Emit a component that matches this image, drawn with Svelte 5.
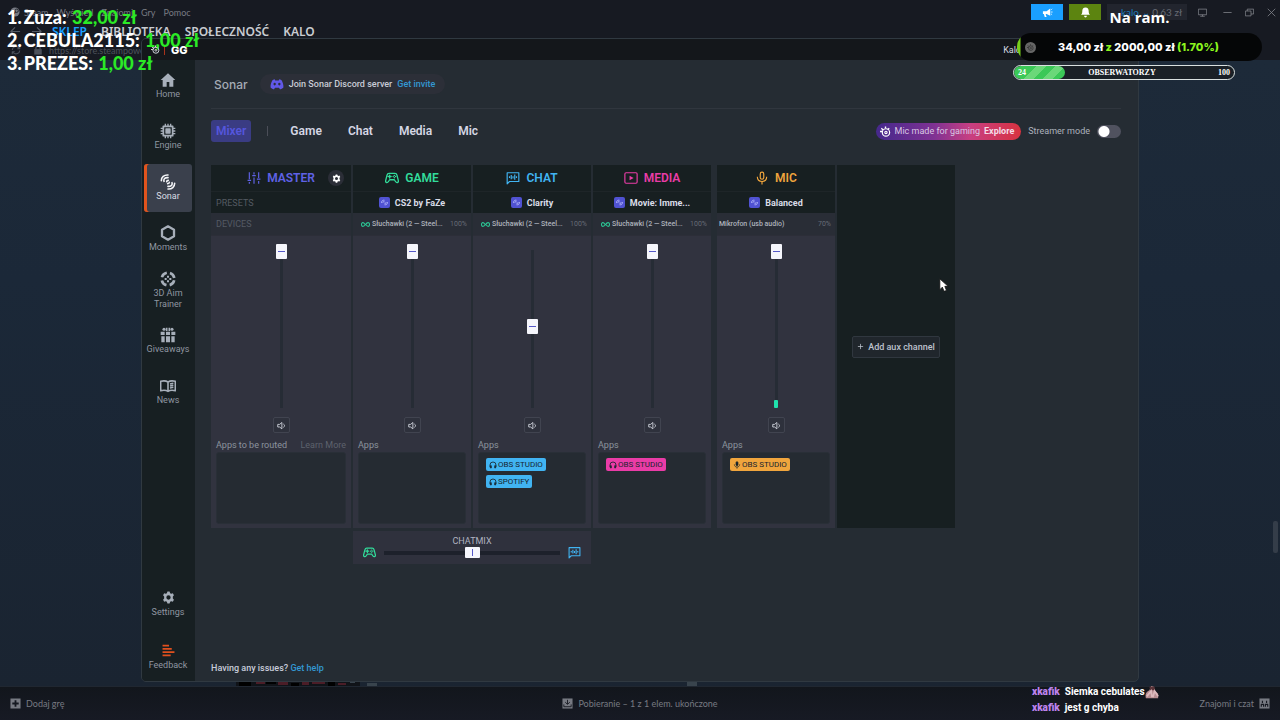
<script lang="ts">
  type Route = { name: string; icon: string };
  type Channel = {
    id: string;
    title: string;
    icon: string;
    preset?: string;
    device?: string;
    gain?: string;
    linked?: boolean;
    volume: number;
    level?: number;
    apps: Route[];
  };

  const steamMenu = ["Steam", "Wyświetl", "Znajomi", "Gry", "Pomoc"];
  const steamNav = ["SKLEP", "BIBLIOTEKA", "SPOŁECZNOŚĆ", "KALO"];

  const mainLinks = [
    { label: "Home", icon: "home" },
    { label: "Engine", icon: "chip" },
    { label: "Sonar", icon: "sonar" },
    { label: "Moments", icon: "hexagon" },
    { label: "3D Aim Trainer", icon: "aim" },
    { label: "Giveaways", icon: "gift" },
    { label: "News", icon: "book" },
  ];
  const footLinks = [
    { label: "Settings", icon: "gear" },
    { label: "Feedback", icon: "feedback" },
  ];

  const tabs = ["Game", "Chat", "Media", "Mic"];
  const headset = "Słuchawki (2 — Steel...";

  let channels = $state<Channel[]>([
    { id: "master", title: "MASTER", icon: "sliders", volume: 100, apps: [] },
    { id: "game", title: "GAME", icon: "gamepad", preset: "CS2 by FaZe", device: headset, gain: "100%", linked: true, volume: 100, apps: [] },
    { id: "chat", title: "CHAT", icon: "chat", preset: "Clarity", device: headset, gain: "100%", linked: true, volume: 50,
      apps: [{ name: "OBS STUDIO", icon: "headphones" }, { name: "SPOTIFY", icon: "headphones" }] },
    { id: "media", title: "MEDIA", icon: "media", preset: "Movie: Imme...", device: headset, gain: "100%", linked: true, volume: 100,
      apps: [{ name: "OBS STUDIO", icon: "headphones" }] },
    { id: "mic", title: "MIC", icon: "mic", preset: "Balanced", device: "Mikrofon (usb audio)", gain: "70%", volume: 100, level: 5,
      apps: [{ name: "OBS STUDIO", icon: "micsolid" }] },
  ]);

  let activePage = $state("Sonar");
  let activeTab = $state("Mixer");
  let chatmix = $state(50);
  let streamerMode = $state(false);

  const donations = [
    { name: "Zuza", amount: "32,00 zł" },
    { name: "CEBULA2115", amount: "1,00 zł" },
    { name: "PREZES", amount: "1,00 zł" },
  ];
</script>

{#snippet icon(name: string)}
  <svg class="icon {name}" viewBox="0 0 24 24" fill="none" stroke="currentColor" stroke-width="2" stroke-linejoin="round" aria-hidden="true">
    {#if name === "home"}
      <path d="M12 2 1 12h3v10h6v-7h4v7h6V12h3Z" fill="currentColor" stroke="none" />
    {:else if name === "chip"}
      <path d="M5 5h14v14H5Z" stroke-width="2.6" />
      <path d="M9 9h6v6H9Z" fill="currentColor" />
      <path d="M8 1v4M12 1v4M16 1v4M8 19v4M12 19v4M16 19v4M1 8h4M1 12h4M1 16h4M19 8h4M19 12h4M19 16h4" />
    {:else if name === "sonar"}
      <g stroke-width="2.4" stroke-linecap="round">
        <path d="M2 10C2 5 6 1 12 1.500M6 11c-1-4 2-6 6-5.500M10 11.500c0-1.500 1-2 2.500-2" />
        <path d="M22 14c0 5-4 9-10 8.500M18 13c1 4-2 6-6 5.500M14 12.500c0 1.500-1 2-2.500 2" />
      </g>
    {:else if name === "hexagon"}
      <path d="m12 2 9 5v10l-9 5-9-5V7Z" stroke-width="3.5" />
    {:else if name === "aim"}
      <circle cx="12" cy="12" r="9.500" stroke-width="4" stroke-dasharray="10 4.900" transform="rotate(12 12 12)" />
      <path d="M12 7v3M17 12h-3M12 17v-3M7 12h3" stroke-width="3" />
    {:else if name === "gift"}
      <path d="M1 7h6v5H1Zm8 0h6v5H9Zm8 0h6v5h-6ZM2 14h5v9H2Zm7 0h6v9H9Zm8 0h5v9h-5Z" fill="currentColor" stroke="none" />
      <circle cx="6" cy="3.500" r="2.300" fill="currentColor" stroke="none" />
      <circle cx="18" cy="3.500" r="2.300" fill="currentColor" stroke="none" />
      <path d="M10 1v5M14 1v5" stroke-width="2.500" />
    {:else if name === "book"}
      <path d="M12 6C9 4 5 4 1 5v14c4-1 8-1 11 1 3-2 7-2 11-1V5c-4-1-8-1-11 1ZM12 6v14M15 9l5-1M15 12l5-1M15 15l5-1" stroke-width="2.400" />
    {:else if name === "gear"}
      <path d="M10 1h4l1 3 2 1 3-1 2 4-2 2v4l2 2-2 4-3-1-2 1-1 3h-4l-1-3-2-1-3 1-2-4 2-2v-4L2 8l2-4 3 1 2-1Zm2 7a4 4 0 1 0 0 8 4 4 0 0 0 0-8Z" fill="currentColor" fill-rule="evenodd" stroke="none" />
    {:else if name === "feedback"}
      <path d="M1 3h12M1 9h17M1 15h22M1 21h15" stroke-width="3.4" />
    {:else if name === "sliders"}
      <path d="M4 2v12M4 19v3M12 2v4M12 11v11M20 2v10M20 17v5M1 16h6M9 8h6M17 14h6" />
    {:else if name === "gamepad"}
      <path d="M7 4h10c2 0 3 1 3.500 3L23 17c0 3-3 4-5 1l-2-3H8l-2 3c-2 3-5 2-5-1L3.500 7C4 5 5 4 7 4ZM8 7v5M5.500 9.500h5M16 7.500h.1M18 9.500h.1M14 9.500h.1M16 11.500h.1" stroke-linecap="round" stroke-width="2.300" />
    {:else if name === "chat"}
      <path d="M2 22V3h20v15H6Z" />
      <path d="M6 9v3M9 7v7M12 9v4M15 6v9M18 9v3" />
    {:else if name === "media"}
      <rect x="1.500" y="3" width="21" height="18" rx="2" />
      <path d="m9.500 8 7 4-7 4Z" fill="currentColor" stroke="none" />
    {:else if name === "mic" || name === "micsolid"}
      <rect x="9" y="2" width="6" height="12" rx="3" fill={name === "micsolid" ? "currentColor" : "none"} />
      <path d="M4 10c0 5 3 8 8 8s8-3 8-8M12 18v5" />
    {:else if name === "headphones"}
      <path d="M3 18v-6a9 9 0 0 1 18 0v6" stroke-width="2.500" />
      <path d="M4 14h3v7H4ZM17 14h3v7h-3Z" fill="currentColor" />
    {:else if name === "wave"}
      <path d="M4 13c0-5 3-8 8-7M8 13c-1-3 1-4 4-3M20 11c0 5-3 8-8 7M16 11c1 3-1 4-4 3" stroke-width="2.500" />
    {:else if name === "link"}
      <path d="M11 12c-2-3-3-5-6-5-5 0-5 10 0 10 3 0 5-2 7-5s4-5 7-5c5 0 5 10 0 10-3 0-4-2-6-5" stroke-width="2.800" />
    {:else if name === "speaker"}
      <path d="M2 9v7h5l6 5V4L7 9ZM17 8c4 2 4 7 0 9" stroke-width="2.400" />
    {:else if name === "plus"}
      <path d="M12 3v18M3 12h18" stroke-width="2.600" />
    {:else if name === "discord"}
      <path d="M8 4 4.500 5C2 9 .5 14 1 18c2 2 4 3 6 3l1.500-2.500h7L17 21c2 0 4-1 6-3 .5-4-1-9-3.500-13L16 4l-1 2H9ZM8 10a2 2.200 0 1 0 0 4.400A2 2.200 0 0 0 8 10Zm8 0a2 2.200 0 1 0 0 4.400A2 2.200 0 0 0 16 10Z" fill="currentColor" fill-rule="evenodd" stroke="none" />
    {:else if name === "series"}
      <circle cx="13" cy="14" r="8" stroke-width="2.600" />
      <circle cx="13" cy="14" r="2.500" stroke-width="2.500" />
      <path d="M0 12h5M3 5l4 4M12 1v4M20 5l-3 3" stroke-width="3" />
    {:else if name === "steam"}
      <circle cx="12" cy="12" r="11" fill="currentColor" stroke="none" />
      <circle cx="16" cy="9" r="4" stroke="#171a22" />
      <path d="m2 14 6 3 5-5" stroke="#171a22" stroke-width="3" />
    {:else if name === "back"}
      <path d="M22 12H3M11 3l-9 9 9 9" stroke-width="2.600" />
    {:else if name === "forward"}
      <path d="M2 12h19M13 3l9 9-9 9" stroke-width="2.600" />
    {:else if name === "reload"}
      <path d="M3 12a9 9 0 0 1 15-6l3 3M21 3v6h-6M21 13a9 9 0 0 1-15 6l-3-3M3 22v-6h6" stroke-width="2.600" />
    {:else if name === "lock"}
      <path d="M3 10h18v13H3Z" fill="currentColor" stroke="none" />
      <path d="M7 11V7c0-6 10-6 10 0v4" stroke-width="3" />
    {:else if name === "horn"}
      <path d="M2 9h8l8-6v16l-8-4H8l2 7H6l-2-7H2Z" fill="currentColor" stroke="none" />
      <path d="M20 11h3M20 6l2-2M20 15l2 2" />
    {:else if name === "bell"}
      <path d="M12 1c-5 0-7 3-7 8 0 4-1 6-3 8h20c-2-2-3-4-3-8 0-5-2-8-7-8ZM9 19h6c0 5-6 5-6 0Z" fill="currentColor" stroke="none" />
    {:else if name === "monitor"}
      <path d="M1 3h22v15H1ZM6 22h12M12 18v4" />
    {:else if name === "minimize"}
      <path d="M1 12h22" />
    {:else if name === "restore"}
      <path d="M1 8h15v13H1ZM6 8V3h17v13h-7" />
    {:else if name === "close"}
      <path d="m2 2 20 20M22 2 2 22" />
    {:else if name === "add"}
      <path d="M1 1h22v22H1ZM10 5v5H5v4h5v5h4v-5h5v-4h-5V5Z" fill="currentColor" fill-rule="evenodd" stroke="none" />
    {:else if name === "download"}
      <path d="M1 1h22v22H1Z" fill="currentColor" stroke="none" />
      <path d="M12 4v9M7 9l5 5 5-5M4 14v5h16v-5" stroke="#171a22" />
    {:else if name === "friends"}
      <path d="M1 1h22v22H1Z" fill="currentColor" stroke="none" />
      <path d="M5 19v-5h5v5M14 19v-5h5v5M7.500 6v5M16.500 6v5" stroke="#171a22" stroke-width="2.500" />
    {/if}
  </svg>
{/snippet}

<div class="desktop">
  <div class="steam">
    <header class="steam-header">
      <div class="steam-left">
        <nav class="steam-menu" aria-label="Menu">
          {@render icon("steam")}
          {#each steamMenu as item}
            <button>{item}</button>
          {/each}
        </nav>
        <nav class="steam-nav" aria-label="Steam">
          {@render icon("back")}
          {@render icon("forward")}
          {#each steamNav as item, i}
            <a href="#steam" class:current={i === 0}>{item}</a>
          {/each}
        </nav>
        <div class="address">
          {@render icon("reload")}
          {@render icon("lock")}
          <span>https://store.steampowered</span>
        </div>
      </div>
      <div class="steam-tools">
        <button class="notice" aria-label="Ogłoszenia">{@render icon("horn")}</button>
        <button class="notice alerts" aria-label="Powiadomienia">{@render icon("bell")}</button>
        <button class="account"><span>kalo ⌄</span> 0,63 zł</button>
        <button class="win" aria-label="Big Picture">{@render icon("monitor")}</button>
        <button class="win" aria-label="Minimalizuj">{@render icon("minimize")}</button>
        <button class="win" aria-label="Przywróć">{@render icon("restore")}</button>
        <button class="win" aria-label="Zamknij">{@render icon("close")}</button>
      </div>
    </header>
    <div class="store">
      <svg class="store-art" viewBox="0 0 470 5" aria-hidden="true">
        <path d="M0 0h124v5H0Z" fill="#101318" />
        <path d="M3 1h12v4H3M30 0h10v3H30M55 2h8v3h-8M92 1h7v4h-7" fill="#000" />
        <path d="M20 1h9v2h-9M42 0h10v4H42M66 1h7v3h-7M76 1h13v2H76M102 2h8v2h-8" fill="#4b1d27" />
        <path d="M114 0h5v2h-5M131 2h10v3h-10M451 0h10v5h-10" fill="#39444d" />
      </svg>
      <div class="scroll-thumb"></div>
    </div>
    <footer class="steam-footer">
      <button>{@render icon("add")}Dodaj grę</button>
      <button>{@render icon("download")}Pobieranie – 1 z 1 elem. ukończone</button>
      <button class="friends-button">Znajomi i czat{@render icon("friends")}</button>
    </footer>
  </div>

  <section class="gg">
    <header class="titlebar">
      <span class="brand">{@render icon("series")}<i></i><b>GG</b></span>
      <span class="user">Kalo</span>
    </header>
    <div class="gg-body">
      <nav class="sidebar" aria-label="GG">
        {#each mainLinks as link}
          <button class:active={activePage === link.label} onclick={() => (activePage = link.label)}>
            {@render icon(link.icon)}
            <span>{link.label}</span>
          </button>
        {/each}
        <div class="sidebar-foot">
          {#each footLinks as link}
            <button onclick={() => (activePage = link.label)}>
              {@render icon(link.icon)}
              <span>{link.label}</span>
            </button>
          {/each}
        </div>
      </nav>

      <main>
        <div class="page-head">
          <h1>Sonar</h1>
          <p class="discord-pill">{@render icon("discord")}Join Sonar Discord server <a href="#discord">Get invite</a></p>
        </div>

        <div class="toolbar">
          <button class="tab mixer" class:active={activeTab === "Mixer"} onclick={() => (activeTab = "Mixer")}>Mixer</button>
          <span class="divider"></span>
          {#each tabs as tab}
            <button class="tab" class:active={activeTab === tab} onclick={() => (activeTab = tab)}>{tab}</button>
          {/each}
          <a class="promo" href="#mic">{@render icon("series")}Mic made for gaming <b>Explore</b></a>
          <label class="streamer">Streamer mode <input type="checkbox" bind:checked={streamerMode} /></label>
        </div>

        <div class="board">
          {#each channels as channel (channel.id)}
            <section class="channel {channel.id}">
              <h2>
                {@render icon(channel.icon)}{channel.title}
                {#if channel.id === "master"}
                  <button class="config" aria-label="Mixer settings">{@render icon("gear")}</button>
                {/if}
              </h2>
              <div class="preset">
                {#if channel.preset}
                  <button><span class="preset-icon">{@render icon("wave")}</span>{channel.preset}</button>
                {:else}
                  PRESETS
                {/if}
              </div>
              <div class="device">
                {#if channel.device}
                  {#if channel.linked}{@render icon("link")}{/if}
                  <span class="device-name">{channel.device}</span>
                  <span class="gain">{channel.gain}</span>
                {:else}
                  DEVICES
                {/if}
              </div>
              <div class="strip">
                <div class="fader">
                  <input type="range" min="0" max="100" bind:value={channel.volume} aria-label="{channel.title} volume" />
                  {#if channel.level}
                    <span class="level" style="height: {channel.level}%"></span>
                  {/if}
                </div>
                <button class="mute" aria-label="Mute {channel.title}">{@render icon("speaker")}</button>
                <div class="apps-head">
                  {#if channel.id === "master"}
                    <span>Apps to be routed</span><a href="#routing">Learn More</a>
                  {:else}
                    <span>Apps</span>
                  {/if}
                </div>
                <div class="apps">
                  {#each channel.apps as app}
                    <button class="app">{@render icon(app.icon)}{app.name}</button>
                  {/each}
                </div>
              </div>
            </section>
          {/each}
          <section class="aux">
            <button>{@render icon("plus")}Add aux channel</button>
          </section>

          <section class="chatmix">
            <label for="chatmix">CHATMIX</label>
            <div class="mix-row">
              {@render icon("gamepad")}
              <input id="chatmix" type="range" min="0" max="100" bind:value={chatmix} />
              {@render icon("chat")}
            </div>
          </section>
        </div>

        <p class="help">Having any issues? <a href="#help">Get help</a></p>
      </main>
    </div>
  </section>

  <ol class="donations">
    {#each donations as donor, i}
      <li><span class="rank">{i + 1}.</span>{donor.name}: <em>{donor.amount}</em></li>
    {/each}
  </ol>

  <div class="stream-goals">
    <p class="goal-title">Na ram.</p>
    <div class="goal">
      <span class="coin">{@render icon("series")}</span>
      <p>34,00 zł <em>z</em> 2000,00 zł <em>(1.70%)</em></p>
    </div>
    <div class="viewers">
      <span class="viewers-fill" style="width: 23%"></span>
      <span>24</span><span>OBSERWATORZY</span><span>100</span>
    </div>
  </div>

  <div class="twitch-chat">
    <p>
      <b>xkafik</b>Siemka cebulates<svg class="emote" viewBox="0 0 16 16" aria-hidden="true">
        <path d="M1 15c-1-4 0-7 4-9l2-5 3 1 1 4 4 4v5Z" fill="#b78d91" />
        <path d="M5 2h6v4H6Z" fill="#5a3439" />
        <path d="m2 13 5-6 1 7M9 14l2-7 4 6" stroke="#dcb9bc" stroke-width="2" fill="none" />
      </svg>
    </p>
    <p><b>xkafik</b>jest g chyba</p>
  </div>

  <svg class="cursor" viewBox="0 0 12 18" aria-hidden="true">
    <path d="M1 1v13l3-3 2 5 3-1-2-5h4Z" fill="#fff" stroke="#111" />
  </svg>
</div>

<style>
  :global(body) {
    margin: 0;
    background: #171a22;
  }

  .desktop {
    position: relative;
    min-height: 100vh;
    overflow: hidden;
    font-family: Roboto, sans-serif;
    font-size: 9px;
    color: #d4d7e0;
  }

  button {
    border: 0;
    padding: 0;
    background: none;
    color: inherit;
    font: inherit;
    white-space: nowrap;
    cursor: pointer;
  }

  a {
    color: inherit;
    text-decoration: none;
  }

  p, h1, h2 {
    margin: 0;
  }

  .icon {
    display: block;
    flex: none;
    width: 12px;
    height: 12px;
  }

  /* Steam client in the background */
  .steam {
    display: flex;
    flex-direction: column;
    min-height: 100vh;
    font-family: Lato, sans-serif;
  }

  .steam-header {
    display: flex;
    justify-content: space-between;
    height: 60px;
    background: #171a22;
    color: #777a83;
  }

  .steam-left {
    display: flex;
    flex-direction: column;
  }

  .steam-menu {
    display: flex;
    align-items: center;
    gap: 8px;
    height: 24px;
    padding-left: 10px;
    font-size: 9px;
  }

  .steam-menu .icon {
    width: 10px;
    height: 10px;
    margin-right: -4px;
  }

  .steam-nav {
    display: flex;
    align-items: center;
    gap: 14px;
    height: 14px;
    padding-left: 10px;
    color: #c9ccd1;
    font: 600 12px "Noto Sans", sans-serif;
  }

  .steam-nav .icon {
    width: 11px;
    height: 11px;
    color: #555963;
    margin-right: -4px;
  }

  .current {
    color: #1a9fff;
  }

  .address {
    display: flex;
    align-items: center;
    gap: 12px;
    height: 22px;
    padding: 2px 0 0 11px;
    font-size: 9px;
    color: #4d525c;
  }

  .address .icon {
    width: 10px;
    height: 10px;
  }

  .address span {
    margin-left: -6px;
  }

  .steam-tools {
    display: flex;
    align-items: flex-start;
    gap: 6px;
    padding: 4px 1px 0 0;
  }

  .notice {
    display: grid;
    place-items: center;
    width: 32px;
    height: 16px;
    background: #1a9fff;
    color: #fff;
  }

  .alerts {
    background: #5c8410;
  }

  .notice .icon {
    width: 11px;
    height: 11px;
  }

  .account {
    box-sizing: border-box;
    width: 80px;
    height: 16px;
    padding-right: 5px;
    background: #22252e;
    color: #676b74;
    font-size: 10px;
    line-height: 16px;
    text-align: right;
  }

  .account span {
    color: #1b78bb;
  }

  .win {
    display: grid;
    place-items: center;
    width: 16px;
    height: 16px;
    color: #85888f;
  }

  .win .icon {
    width: 9px;
    height: 9px;
  }

  .account + .win {
    margin: 0 3px 0 1px;
  }

  .store {
    position: relative;
    display: flex;
    flex: 1;
    justify-content: flex-end;
    align-items: flex-end;
    padding: 0 2px 133px 0;
    background: linear-gradient(#1d2a39, #1b2838 35%, #1a2431);
  }

  .store-art {
    position: absolute;
    left: 236px;
    bottom: 0;
    width: 470px;
    height: 5px;
  }

  .scroll-thumb {
    width: 5px;
    height: 32px;
    border-radius: 2px;
    background: #343d49;
  }

  .steam-footer {
    display: grid;
    grid-template-columns: 1fr auto 1fr;
    align-items: center;
    height: 33px;
    padding: 0 10px;
    border-top: 1px solid #202731;
    background: linear-gradient(#12161c, #171a24);
    color: #777a82;
    font-size: 9px;
  }

  .steam-footer button {
    display: flex;
    align-items: center;
    gap: 5px;
  }

  .steam-footer .icon {
    width: 11px;
    height: 11px;
  }

  .steam-footer .friends-button {
    justify-self: end;
  }

  /* SteelSeries GG window */
  .gg {
    position: absolute;
    inset: 38px 141px;
    display: flex;
    flex-direction: column;
    border: 1px solid #303941;
    border-radius: 5px;
    overflow: hidden;
    background: #252c33;
  }

  .titlebar {
    display: flex;
    justify-content: space-between;
    align-items: center;
    height: 21px;
    padding: 0 117px 0 9px;
    background: #14171b;
    font-size: 9px;
  }

  .brand {
    display: flex;
    align-items: center;
    gap: 4px;
  }

  .brand .icon {
    width: 9px;
    height: 9px;
  }

  .brand i {
    width: 1px;
    height: 10px;
    background: #a9331b;
  }

  .brand b {
    margin-left: 2px;
    font: 800 11px Inter, sans-serif;
    color: #fff;
  }

  .gg-body {
    display: flex;
    flex: 1;
    min-height: 0;
  }

  .sidebar {
    display: flex;
    flex-direction: column;
    gap: 3px;
    width: 48px;
    padding: 2px 3px 0 2px;
    background: #171f22;
    color: #8f96a1;
  }

  .sidebar button {
    display: flex;
    flex-direction: column;
    align-items: center;
    justify-content: center;
    gap: 1px;
    flex: none;
    height: 48px;
    font-size: 9px;
    line-height: 11px;
    white-space: normal;
  }

  .sidebar .icon {
    width: 16px;
    height: 16px;
    color: #a7afba;
  }

  .sidebar button.active {
    border-radius: 3px;
    background: #3a404c;
    box-shadow: inset 3px 0 #e2541d;
    color: #d9dce3;
  }

  .sidebar button.active .icon {
    color: #f2f3f6;
  }

  .sidebar .gear, .sidebar .feedback {
    width: 13px;
    height: 13px;
    margin-bottom: 2px;
  }

  .sidebar .feedback {
    color: #e1501e;
  }

  .sidebar-foot {
    display: flex;
    flex-direction: column;
    gap: 5px;
    margin-top: auto;
  }

  main {
    display: flex;
    flex-direction: column;
    flex: 1;
    min-width: 0;
    padding: 0 17px 6px 16px;
  }

  .page-head {
    display: flex;
    align-items: center;
    gap: 12px;
    height: 48px;
    padding-left: 3px;
    border-bottom: 1px solid #30363e;
  }

  h1 {
    color: #a4abb5;
    font: 500 12px Inter, sans-serif;
  }

  .discord-pill {
    display: flex;
    align-items: center;
    gap: 5px;
    height: 20px;
    padding: 0 10px;
    border-radius: 10px;
    background: #2c2f38;
    color: #c9ccd6;
    font-weight: 500;
  }

  .discord-pill .icon {
    width: 14px;
    height: 14px;
    color: #6158e8;
  }

  .discord-pill a, .help a {
    color: #3398d2;
  }

  .toolbar {
    display: flex;
    align-items: center;
    height: 22px;
    margin: 11px 0 23px;
  }

  .tab {
    margin-right: 26px;
    color: #d5d7e5;
    font-size: 12px;
    font-weight: 600;
  }

  .mixer {
    height: 22px;
    margin-right: 0;
    padding: 0 5px;
    border-radius: 3px;
  }

  .mixer.active {
    background: #3a3c83;
    color: #5556dd;
  }

  .divider {
    width: 1px;
    height: 10px;
    margin: 0 22px 0 16px;
    background: #4b4e58;
  }

  .promo {
    display: flex;
    align-items: center;
    gap: 4px;
    height: 17px;
    margin-left: auto;
    padding: 0 7px 0 4px;
    border-radius: 9px;
    background: linear-gradient(90deg, #45288b, #7f3293 40%, #c83f82 65%, #d8323f);
    color: #d9c7e3;
  }

  .promo .icon {
    width: 11px;
    height: 11px;
    color: #fff;
  }

  .promo b {
    color: #f4dce7;
    font-weight: 700;
  }

  .streamer {
    display: flex;
    align-items: center;
    gap: 7px;
    margin-left: 7px;
    color: #adb2bc;
  }

  .streamer input {
    appearance: none;
    width: 24px;
    height: 13px;
    margin: 0;
    border-radius: 7px;
    background: radial-gradient(circle at 7px 50%, #fff 5px, transparent 6px), #50525f;
  }

  .streamer input:checked {
    background: radial-gradient(circle at 17px 50%, #fff 5px, transparent 6px), #5556dd;
  }

  .board {
    display: grid;
    grid-template-columns: 140px repeat(3, 118px) 122px 118px;
    column-gap: 2px;
    row-gap: 3px;
  }

  .channel {
    --tone: #5f62e6;
    min-width: 0;
    background: #31333f;
  }

  .channel.game { --tone: #32dc9b; }
  .channel.chat { --tone: #41b4f2; }
  .channel.media { --tone: #ea3ca7; }
  .channel.mic { --tone: #f0a53d; }

  .channel.mic {
    margin-left: 4px;
  }

  h2 {
    position: relative;
    display: flex;
    align-items: center;
    justify-content: center;
    gap: 6px;
    height: 26px;
    border-bottom: 1px solid #1e2528;
    background: #171f21;
    color: var(--tone);
    font-size: 12px;
    font-weight: 600;
  }

  h2 .icon {
    width: 14px;
    height: 14px;
  }

  .config {
    position: absolute;
    right: 7px;
    display: grid;
    place-items: center;
    width: 16px;
    height: 16px;
    border-radius: 50%;
    background: #2b2e37;
    color: #fff;
  }

  .config .icon {
    width: 9px;
    height: 9px;
  }

  .preset {
    display: flex;
    align-items: center;
    height: 21px;
    padding: 0 5px;
    background: #171f21;
    color: #545a61;
  }

  .preset button {
    display: flex;
    align-items: center;
    gap: 5px;
    margin: 0 auto;
    color: #dadce8;
    font-weight: 700;
  }

  .preset-icon {
    padding: 1px;
    border-radius: 2px;
    background: #5052d2;
    color: #b3b5fa;
  }

  .preset-icon .icon {
    width: 9px;
    height: 9px;
  }

  .device {
    display: flex;
    align-items: center;
    gap: 2px;
    height: 22px;
    padding: 0 4px 0 5px;
    background: #292d36;
    color: #545a64;
  }

  .game .device, .chat .device, .media .device {
    padding-left: 8px;
  }

  .mic .device {
    padding-left: 2px;
  }

  .device .icon {
    width: 9px;
    height: 9px;
    color: #2bc694;
  }

  .device-name {
    flex: 1;
    color: #aeb3bd;
    font-size: 7px;
    font-weight: 500;
    white-space: nowrap;
  }

  .gain {
    color: #676c76;
    font-size: 7px;
  }

  .strip {
    display: flex;
    flex-direction: column;
    align-items: center;
    padding: 8px 5px 4px;
    border-top: 1px solid #2c2e38;
  }

  .fader {
    position: relative;
    display: flex;
    justify-content: center;
    height: 164px;
  }

  .fader input {
    appearance: none;
    writing-mode: vertical-lr;
    direction: rtl;
    width: 11px;
    height: 164px;
    margin: 0;
    background: linear-gradient(#262c35, #262c35) center 6px / 3px 158px no-repeat;
  }

  .fader input::-webkit-slider-thumb {
    appearance: none;
    width: 11px;
    height: 15px;
    border-radius: 1px;
    background: linear-gradient(#5558c8, #5558c8) center / 7px 1px no-repeat, #f5f6fc;
  }

  .level {
    position: absolute;
    bottom: 0;
    width: 4px;
    border-radius: 1px;
    background: #20e2ac;
  }

  .mute {
    display: grid;
    place-items: center;
    width: 17px;
    height: 16px;
    margin-top: 9px;
    border: 1px solid #414450;
    border-radius: 2px;
    background: #2e313c;
    color: #d3d6df;
  }

  .mute .icon {
    width: 9px;
    height: 9px;
  }

  .apps-head {
    display: flex;
    justify-content: space-between;
    align-self: stretch;
    height: 12px;
    margin: 6px 0 1px;
    color: #8c939e;
    line-height: 12px;
  }

  .apps-head a {
    color: #5d626d;
  }

  .apps {
    display: flex;
    flex-direction: column;
    align-items: flex-start;
    align-self: stretch;
    gap: 4px;
    box-sizing: border-box;
    height: 72px;
    padding: 5px 7px;
    border: 1px solid #292f37;
    border-radius: 3px;
    background: #252b32;
  }

  .app {
    display: flex;
    align-items: center;
    gap: 1px;
    height: 13px;
    padding: 0 3px;
    border-radius: 2px;
    background: var(--tone);
    color: #17242e;
    font-size: 8px;
  }

  .app .icon {
    width: 8px;
    height: 8px;
  }

  .aux {
    display: grid;
    place-items: center;
    background: #171f21;
  }

  .aux button {
    display: flex;
    align-items: center;
    gap: 4px;
    height: 22px;
    padding: 0 4px;
    border: 1px solid #30373f;
    border-radius: 2px;
    background: #20262c;
    color: #bdc2cd;
    font-weight: 500;
  }

  .aux .icon {
    width: 7px;
    height: 7px;
  }

  .chatmix {
    grid-column: 2 / span 2;
    display: flex;
    flex-direction: column;
    align-items: center;
    height: 28px;
    padding: 5px 10px 0;
    background: #2f313d;
    color: #b0b3c0;
  }

  .chatmix label {
    line-height: 10px;
  }

  .mix-row {
    display: flex;
    align-items: center;
    gap: 8px;
    align-self: stretch;
  }

  .mix-row .icon {
    width: 13px;
    height: 13px;
    color: #41b4f2;
  }

  .mix-row .gamepad {
    color: #32dc9b;
  }

  .mix-row input {
    appearance: none;
    flex: 1;
    min-width: 0;
    height: 11px;
    margin: 0;
    background: linear-gradient(#1d212b, #1d212b) center / 100% 4px no-repeat;
  }

  .mix-row input::-webkit-slider-thumb {
    appearance: none;
    width: 15px;
    height: 11px;
    border-radius: 1px;
    background: linear-gradient(#5558c8, #5558c8) center / 1px 7px no-repeat, #f5f6fc;
  }

  .help {
    margin-top: auto;
    color: #c9ccdb;
    font-weight: 500;
    line-height: 14px;
  }

  /* stream overlays */
  .donations {
    position: absolute;
    top: 6px;
    left: 7px;
    margin: 0;
    padding: 0;
    list-style: none;
    color: #fff;
    font: 900 18px/23px Lato, sans-serif;
  }

  .rank {
    margin-right: 2px;
  }

  .donations em {
    margin-left: 1px;
    color: #2bea26;
    font-style: normal;
  }

  .stream-goals {
    position: absolute;
    top: 8px;
    right: 18px;
    width: 249px;
    color: #fff;
  }

  .goal-title {
    padding-left: 4px;
    text-align: center;
    font: 700 15px/18px "Open Sans", sans-serif;
  }

  .goal {
    display: flex;
    align-items: center;
    height: 28px;
    margin: 7px 0 4px 4px;
    padding-left: 8px;
    border-radius: 15px;
    background: linear-gradient(90deg, #77cf1b 3px, #050607 4px);
    font: 800 11px Inter, sans-serif;
  }

  .coin {
    display: grid;
    place-items: center;
    width: 11px;
    height: 11px;
    margin-right: 22px;
    border-radius: 50%;
    background: #666;
    color: #333;
  }

  .coin .icon {
    width: 7px;
    height: 7px;
  }

  .goal em {
    color: #8bf51d;
    font-style: normal;
  }

  .viewers {
    position: relative;
    display: flex;
    justify-content: space-between;
    align-items: center;
    box-sizing: border-box;
    width: 222px;
    height: 15px;
    padding: 0 4px;
    border: 1px solid #d9e0df;
    border-radius: 8px;
    background: #1a2026;
    overflow: hidden;
    font: 700 8px/13px "Liberation Serif", serif;
  }

  .viewers span {
    position: relative;
  }

  .viewers .viewers-fill {
    position: absolute;
    inset: 0 auto 0 0;
    border-radius: 8px;
    background: linear-gradient(135deg, #3bc857 35%, #6bd879 35% 50%, #3bc857 50% 65%, #6bd879 65% 80%, #3bc857 80%);
  }

  .twitch-chat {
    position: absolute;
    right: 121px;
    bottom: 4px;
    width: 127px;
    color: #fff;
    font: 700 10px/16px Roboto, sans-serif;
    white-space: nowrap;
  }

  .twitch-chat b {
    margin-right: 5px;
    color: #bd83ed;
  }

  .emote {
    width: 14px;
    height: 14px;
    vertical-align: middle;
  }

  .cursor {
    position: absolute;
    left: 939px;
    top: 278px;
    width: 10px;
    height: 15px;
  }
</style>
